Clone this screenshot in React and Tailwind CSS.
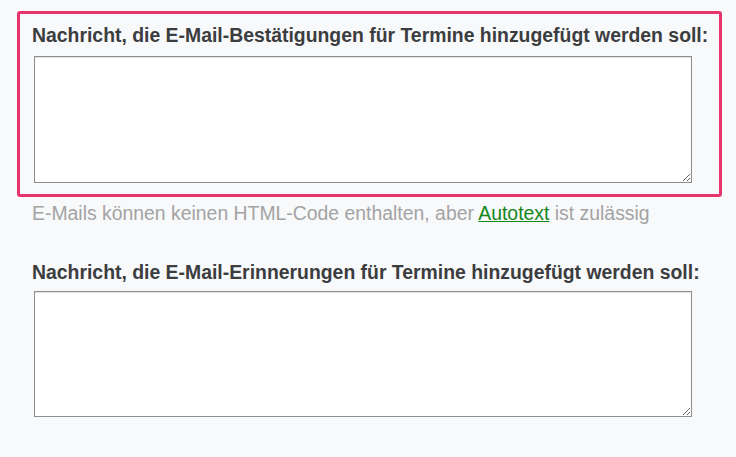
export default function App() {
  return (
    <div
      className="min-h-[457px] w-[736px] bg-[#f8f9fa] pl-[17px] pt-[11px]"
      style={{ fontFamily: '"Liberation Sans", Arial, sans-serif' }}
    >
      <div className="w-[705px] rounded-[3px] border-[3px] border-[#e8336b] pl-[12px] pt-[8px] pb-[11px]">
        <label className="block text-[19.4px] font-bold leading-[26px] text-[#3c3d3f]">
          Nachricht, die E-Mail-Bestätigungen für Termine hinzugefügt werden soll:
        </label>
        <textarea className="mt-[8px] ml-[2px] block h-[127px] w-[658px] resize-y border border-[#8e8e8e] bg-white shadow-[inset_0_1px_1px_rgba(0,0,0,0.12)] outline-none" />
      </div>
      <p className="mt-[4px] pl-[15px] text-[19.4px] leading-[24px] text-[#a3a3a3]">
        E-Mails können keinen HTML-Code enthalten, aber{" "}
        <a href="#" className="text-[#13871a] underline">
          Autotext
        </a>{" "}
        ist zulässig
      </p>
      <div className="pl-[15px] pt-[34px]">
        <label className="block text-[19.4px] font-bold leading-[26px] text-[#3c3d3f]">
          Nachricht, die E-Mail-Erinnerungen für Termine hinzugefügt werden soll:
        </label>
        <textarea className="mt-[6px] ml-[2px] block h-[126px] w-[658px] resize-y border border-[#8e8e8e] bg-white shadow-[inset_0_1px_1px_rgba(0,0,0,0.12)] outline-none" />
      </div>
    </div>
  );
}
